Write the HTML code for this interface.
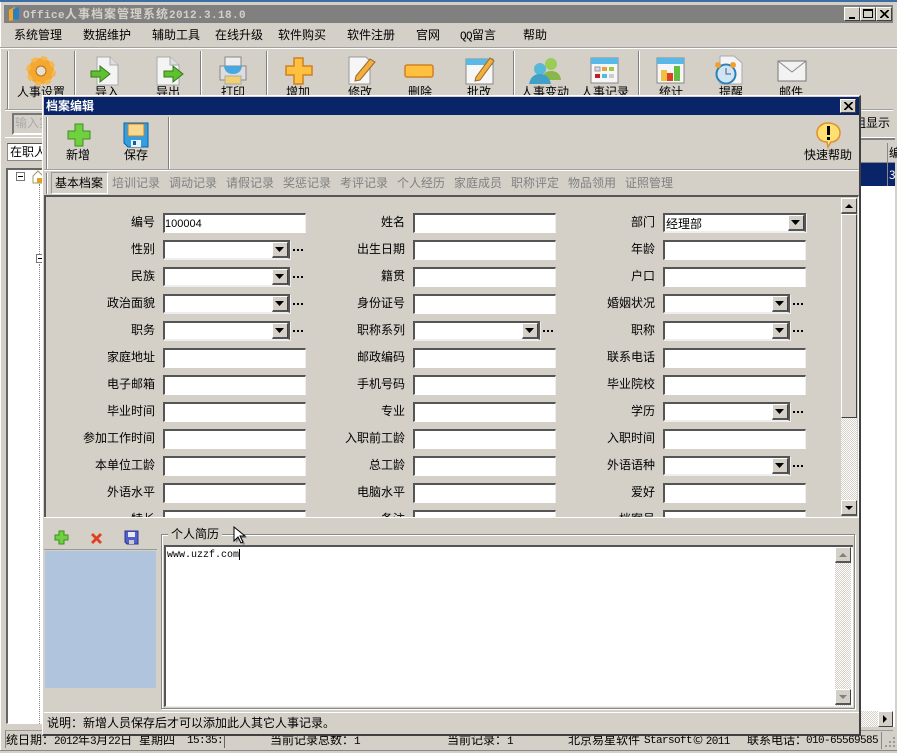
<!DOCTYPE html>
<html><head><meta charset="utf-8"><style>
html,body{margin:0;padding:0;width:897px;height:753px;overflow:hidden;background:#d4d0c8}
body{position:relative;font:12px/14px "WenQuanYi Zen Hei","Noto Sans CJK SC",sans-serif;color:#000}
div,span,svg{position:absolute;box-sizing:border-box}
.t{white-space:nowrap}
.m{top:28px}
.tb{white-space:nowrap;text-align:center;width:60px;top:85px}
.sep{width:2px;background:#fff;border-left:1px solid #808080}
.i{background:#fff;border-top:2px solid #555;border-left:2px solid #555;border-right:1px solid #eee;border-bottom:1px solid #fff;height:20px;width:143px}
.c{background:#fff;border-top:2px solid #555;border-left:2px solid #555;border-right:2px solid #555;border-bottom:1px solid #eee;height:19px;box-shadow:1px 1px 0 #eee;width:127px}
.cb{right:0;top:0;width:16px;height:16px;background:#d4d0c8;border-top:1px solid #fff;border-left:1px solid #fff;border-right:1px solid #404040;border-bottom:2px solid #555}
.cb svg{left:2px;top:4px}
.sb{background:#d4d0c8;border-top:1px solid #fff;border-left:1px solid #fff;border-right:1px solid #404040;border-bottom:2px solid #555}
.sb:after{content:"";position:absolute;left:3px;top:5px;border-left:4px solid transparent;border-right:4px solid transparent;border-top:4px solid #000}
.sb.up:after{border-top:0;border-bottom:4px solid #000}
.sb.gray:after{border-top-color:#808080;border-bottom-color:#808080}
.d{width:12px;height:2px;background:repeating-linear-gradient(90deg,#000 0 2px,transparent 2px 4px)}
.l{width:90px;text-align:right;white-space:nowrap;letter-spacing:0}
.tab{top:176px;color:#808080;white-space:nowrap}
.btn{background:#d4d0c8;border-top:1px solid #fff;border-left:1px solid #fff;border-right:1px solid #404040;border-bottom:1px solid #404040}
.mono{position:static;font:11px/14px 'Liberation Mono',monospace;letter-spacing:-.6px}
</style></head><body>
<div style="left:0;top:0;width:897px;height:2px;background:#3a6ea5"></div>
<div style="left:0;top:2px;width:1px;height:751px;background:#fff"></div>
<div style="left:4px;top:5px;width:889px;height:18px;background:#808080"></div>
<svg style="left:7px;top:6px" width="16" height="16"><path d="M2 4L8 1V14L2 15Z" fill="#f5a623"/><path d="M6 3L12 1V13L6 14Z" fill="#2a7fc0"/></svg>
<div class="t" style="left:23px;top:7px;color:#d4d0c8;font-weight:bold;letter-spacing:1px"><span style="position:static;font:bold 11px/14px 'Liberation Mono',monospace;letter-spacing:.4px">Office</span>人事档案管理系统<span style="position:static;font:bold 11px/14px 'Liberation Mono',monospace;letter-spacing:.4px">2012.3.18.0</span></div>
<div class="btn" style="left:844px;top:7px;width:16px;height:14px"><span style="left:4px;top:9px;width:6px;height:2px;background:#000"></span></div>
<div class="btn" style="left:860px;top:7px;width:16px;height:14px"><span style="left:2px;top:1px;width:10px;height:9px;border:1px solid #000;border-top-width:2px"></span></div>
<div class="btn" style="left:876px;top:7px;width:16px;height:14px"><svg style="left:3px;top:2px" width="9" height="8"><path d="M0 0L8 8M1 0L9 8M8 0L0 8M9 0L1 8" stroke="#000"/></svg></div>

<div class="t m" style="left:14px">系统管理</div><div class="t m" style="left:83px">数据维护</div><div class="t m" style="left:152px">辅助工具</div><div class="t m" style="left:215px">在线升级</div><div class="t m" style="left:278px">软件购买</div><div class="t m" style="left:347px">软件注册</div><div class="t m" style="left:416px">官网</div><div class="t m" style="left:460px"><span class="mono">QQ</span>留言</div><div class="t m" style="left:523px">帮助</div>
<div style="left:0;top:47px;width:897px;height:2px;background:#fff;border-top:1px solid #a0a0a0"></div>

<div class="sep" style="left:7px;top:51px;height:58px"></div><div class="sep" style="left:74px;top:51px;height:45px"></div><div class="sep" style="left:200px;top:51px;height:45px"></div><div class="sep" style="left:266px;top:51px;height:45px"></div><div class="sep" style="left:513px;top:51px;height:45px"></div><div class="sep" style="left:638px;top:51px;height:45px"></div>
<svg style="left:26px;top:56px" width="30" height="30"><circle cx="15" cy="15" r="9" fill="none" stroke="#f4a830" stroke-width="8"/><circle cx="15" cy="15" r="13" fill="none" stroke="#f5b850" stroke-width="4" stroke-dasharray="5.500 4.700"/><circle cx="15" cy="15" r="5" fill="#e4e0d4" stroke="#b87018"/></svg>
<svg style="left:90px;top:56px" width="32" height="32"><path d="M7 1H20L28 9V29H7Z" fill="#f4f4f4" stroke="#aaa"/><path d="M20 1V9H28" fill="#ddd" stroke="#aaa"/><path d="M1 15H10V10L20 18L10 26V21H1Z" fill="#60c030" stroke="#2f7a18"/></svg>
<svg style="left:155px;top:56px" width="34" height="32"><path d="M2 1H15L24 9V29H2Z" fill="#f4f4f4" stroke="#aaa"/><path d="M15 1V9H24" fill="#ddd" stroke="#aaa"/><path d="M9 15H18V10L28 18L18 26V21H9Z" fill="#60c030" stroke="#2f7a18"/></svg>
<svg style="left:219px;top:56px" width="29" height="30"><path d="M6 1H22V10H6Z" fill="#eee" stroke="#888"/><rect x="1" y="10" width="26" height="14" fill="#ddd" stroke="#888"/><path d="M5 10H23Q22 18 14 18Q6 18 5 10Z" fill="#4aa8e0"/><rect x="6" y="20" width="16" height="8" fill="#f0d070" stroke="#aaa"/></svg>
<svg style="left:284px;top:56px" width="30" height="30"><path d="M10 2H19V10H28V19H19V28H10V19H2V10H10Z" fill="#ffc040" stroke="#d08020" stroke-width="1.500"/></svg>
<svg style="left:347px;top:55px" width="30" height="31"><path d="M2 2H19L23 6V29H2Z" fill="#f6f6f6" stroke="#999"/><path d="M9 21L23 4L28 7L13 25L8 26Z" fill="#f0b040" stroke="#a06820"/></svg>
<svg style="left:404px;top:64px" width="30" height="14"><rect x="1" y="1" width="28" height="12" rx="2" fill="#ffc040" stroke="#d08020" stroke-width="1.500"/></svg>
<svg style="left:465px;top:55px" width="31" height="31"><rect x="1" y="4" width="27" height="25" fill="#f6f6f6" stroke="#888"/><rect x="1" y="4" width="27" height="6" fill="#58b8e8"/><path d="M11 22L25 3L29 6L15 25L10 26Z" fill="#f0b040" stroke="#a06820"/></svg>
<svg style="left:528px;top:56px" width="34" height="29"><circle cx="23" cy="8" r="6" fill="#9ccc58"/><path d="M14 24Q15 15 23 15Q32 15 33 24Z" fill="#88b848"/><circle cx="12" cy="13" r="6" fill="#58b8d8"/><path d="M1 28Q3 18 12 18Q21 18 23 28Z" fill="#40a0c8"/></svg>
<svg style="left:590px;top:57px" width="30" height="28"><rect x="1" y="1" width="27" height="25" fill="#f6f6f6" stroke="#888"/><rect x="1" y="1" width="27" height="6" fill="#58b8e8"/><rect x="5" y="10" width="5" height="4" fill="#ddd" stroke="#999"/><rect x="12" y="10" width="5" height="4" fill="#e8a040"/><rect x="19" y="10" width="5" height="4" fill="#9c4"/><rect x="5" y="17" width="5" height="4" fill="#c02020"/><rect x="12" y="17" width="5" height="4" fill="#5bd"/><rect x="19" y="17" width="5" height="4" fill="#ccc"/></svg>
<svg style="left:656px;top:57px" width="30" height="28"><rect x="1" y="1" width="27" height="25" fill="#f6f6f6" stroke="#888"/><rect x="1" y="1" width="27" height="6" fill="#58b8e8"/><rect x="5" y="13" width="6" height="11" fill="#f0c040"/><rect x="11" y="16" width="6" height="8" fill="#e04020"/><rect x="18" y="9" width="6" height="15" fill="#60c040"/></svg>
<svg style="left:714px;top:55px" width="30" height="31"><path d="M6 1H20L28 8V29H6Z" fill="#f4f4f4" stroke="#aaa"/><circle cx="12" cy="19" r="9.500" fill="#cfe4f4" stroke="#2a80b8" stroke-width="2"/><path d="M12 13V19H17" stroke="#557" fill="none"/><circle cx="4" cy="10" r="3" fill="#f0a030"/><circle cx="19" cy="10" r="3" fill="#f0a030"/></svg>
<svg style="left:777px;top:60px" width="30" height="22"><rect x="1" y="1" width="28" height="20" fill="#f2f2f2" stroke="#777"/><path d="M1 1L15 12L29 1" fill="none" stroke="#888"/></svg>
<div class="tb" style="left:11px">人事设置</div><div class="tb" style="left:77px">导入</div><div class="tb" style="left:138px">导出</div><div class="tb" style="left:203px">打印</div><div class="tb" style="left:268px">增加</div><div class="tb" style="left:330px">修改</div><div class="tb" style="left:390px">删除</div><div class="tb" style="left:449px">批改</div><div class="tb" style="left:515px">人事变动</div><div class="tb" style="left:575px">人事记录</div><div class="tb" style="left:641px">统计</div><div class="tb" style="left:701px">提醒</div><div class="tb" style="left:761px">邮件</div>

<div style="left:5px;top:109px;width:888px;height:2px;background:#fff;border-top:1px solid #a0a0a0"></div>
<div style="left:12px;top:113px;width:32px;height:22px;background:#d4d0c8;border:2px solid #777;border-right:0;border-bottom-color:#fff"></div>
<div class="t" style="left:15px;top:116px;color:#aaa;width:28px;overflow:hidden">输入实</div>
<div class="t" style="left:854px;top:116px">组显示</div>
<div style="left:5px;top:137px;width:890px;height:1px;background:#fff"></div>
<div style="left:7px;top:143px;width:37px;height:18px;background:#fff;border:1px solid #888;border-top-color:#555"></div>
<div class="t" style="left:10px;top:145px;width:33px;overflow:hidden">在职人</div>
<div style="left:6px;top:168px;width:38px;height:556px;background:#fff;border:2px solid #666;border-right:0;border-bottom:1px solid #fff"></div>
<div style="left:16px;top:172px;width:9px;height:9px;background:#fff;border:1px solid #777"><span style="left:1px;top:3px;width:5px;height:1px;background:#000"></span></div>
<svg style="left:32px;top:170px" width="11" height="14"><path d="M1 6L6 1L11 6V13H1Z" fill="#fff" stroke="#996"/><rect x="5" y="8" width="5" height="5" fill="#e0a020"/></svg>
<div style="left:36px;top:254px;width:7px;height:9px;background:#fff;border:1px solid #777"><span style="left:1px;top:3px;width:5px;height:1px;background:#000"></span></div>
<div style="left:39px;top:184px;width:1px;height:70px;border-left:1px dotted #888"></div>
<div style="left:39px;top:264px;width:1px;height:460px;border-left:1px dotted #888"></div>

<div style="left:860px;top:138px;width:35px;height:2px;background:#808080"></div>
<div style="left:860px;top:140px;width:35px;height:23px;background:#d4d0c8;border-bottom:1px solid #888"></div>
<div style="left:887px;top:143px;width:1px;height:19px;background:#888"></div>
<div class="t" style="left:889px;top:146px">编</div>
<div style="left:860px;top:163px;width:35px;height:23px;background:#0a246a"></div>
<div style="left:887px;top:163px;width:1px;height:23px;background:#888"></div>
<div class="t" style="left:889px;top:168px;color:#fff">3</div>
<div style="left:860px;top:186px;width:35px;height:525px;background:#fff"></div>
<div style="left:860px;top:711px;width:35px;height:16px;background:#fff"></div>
<div style="left:860px;top:711px;width:18px;height:16px;background:repeating-conic-gradient(#d4d0c8 0 25%,#fff 0 50%) 0 0/2px 2px"></div>
<div class="btn" style="left:878px;top:711px;width:15px;height:16px"><span style="left:4px;top:3px;border-top:4px solid transparent;border-bottom:4px solid transparent;border-left:4px solid #000"></span></div>

<div style="left:5px;top:730px;width:888px;height:1px;background:#999"></div>
<div style="left:5px;top:731px;width:1px;height:17px;background:#888"></div>
<div class="t" style="left:6px;top:733px">统日期：<span class="mono">2012</span>年<span class="mono">3</span>月<span class="mono">22</span>日</div>
<div class="t" style="left:139px;top:733px">星期四</div>
<div class="t mono" style="position:absolute;left:187px;top:734px">15:35:</div>
<div style="left:224px;top:732px;width:1px;height:16px;background:#666"></div>
<div class="t" style="left:270px;top:733px">当前记录总数：<span class="mono">1</span></div>
<div class="t" style="left:447px;top:733px">当前记录：<span class="mono">1</span></div>
<div class="t" style="left:568px;top:733px">北京易星软件</div>
<div class="t mono" style="position:absolute;left:644px;top:734px">Starsoft</div>
<div class="t" style="left:693px;top:733px">© <span class="mono">2011</span></div>
<div class="t" style="left:747px;top:733px">联系电话：</div>
<div class="t mono" style="position:absolute;left:806px;top:734px">010-65569585</div>
<div style="left:881px;top:732px;width:1px;height:17px;background:#888"></div>
<svg style="left:883px;top:735px" width="13" height="13"><path d="M10 2h2v2h-2zM6 6h2v2H6zM10 6h2v2h-2zM2 10h2v2H2zM6 10h2v2H6zM10 10h2v2h-2z" fill="#999"/></svg>
<div style="left:0;top:750px;width:897px;height:3px;background:#d4d0c8;border-top:1px solid #888"></div>

<!-- dialog -->
<div style="left:42px;top:95px;width:819px;height:641px;background:#d4d0c8;border-top:1px solid #fff;border-left:1px solid #fff;border-right:2px solid #404040;border-bottom:2px solid #404040"></div>
<div style="left:44px;top:97px;width:815px;height:18px;background:#0a246a"></div>
<div class="t" style="left:46px;top:99px;color:#fff;font-weight:bold">档案编辑</div>
<div class="btn" style="left:840px;top:99px;width:16px;height:14px"><svg style="left:3px;top:2px" width="9" height="8"><path d="M0 0L8 8M1 0L9 8M8 0L0 8M9 0L1 8" stroke="#000"/></svg></div>

<div class="sep" style="left:46px;top:117px;height:52px"></div>
<div class="sep" style="left:168px;top:117px;height:52px"></div>
<svg style="left:66px;top:122px" width="26" height="26"><path d="M9 2H17V9H24V17H17V24H9V17H2V9H9Z" fill="#70d040" stroke="#3c9020"/></svg>
<svg style="left:123px;top:122px" width="26" height="26"><path d="M1 1H25V25H5L1 21Z" fill="#30a0e0" stroke="#1060a0"/><rect x="5" y="2" width="16" height="12" fill="#f8d890" stroke="#c08030"/><rect x="8" y="18" width="10" height="7" fill="#e8f0f8"/><rect x="10" y="19" width="3" height="4" fill="#1060a0"/></svg>
<div class="t" style="left:66px;top:148px">新增</div><div class="t" style="left:124px;top:148px">保存</div>
<svg style="left:816px;top:121px" width="25" height="28"><path d="M12 2C19 2 24 6 24 12C24 18 19 21 15 21L12 26L11 21C6 21 1 18 1 12C1 6 6 2 12 2Z" fill="#ffe070" stroke="#e09030" stroke-width="1.500"/><rect x="11" y="5" width="3" height="9" fill="#000"/><rect x="11" y="16" width="3" height="3" fill="#000"/></svg>
<div class="t" style="left:804px;top:148px">快速帮助</div>
<div style="left:44px;top:169px;width:815px;height:2px;background:#fff;border-top:1px solid #a0a0a0"></div>

<div class="sep" style="left:46px;top:173px;height:21px"></div>
<div style="left:51px;top:172px;width:57px;height:22px;border:1px solid #fff;border-top-color:#999;border-left-color:#999"></div>
<div class="t" style="left:55px;top:176px">基本档案</div>
<div class="tab" style="left:112px">培训记录</div><div class="tab" style="left:169px">调动记录</div><div class="tab" style="left:226px">请假记录</div><div class="tab" style="left:283px">奖惩记录</div><div class="tab" style="left:340px">考评记录</div><div class="tab" style="left:397px">个人经历</div><div class="tab" style="left:454px">家庭成员</div><div class="tab" style="left:511px">职称评定</div><div class="tab" style="left:568px">物品领用</div><div class="tab" style="left:625px">证照管理</div>

<!-- form -->
<div style="left:44px;top:195px;width:815px;height:322px;overflow:hidden;border-top:2px solid #555;border-left:2px solid #555;border-right:1px solid #fff">
<div class="l" style="left:19px;top:18px;width:90px">编号</div><div class="i" style="left:117px;top:16px"><span class="t" style="left:0;top:2px;font:11px/14px 'Liberation Sans',sans-serif">100004</span></div>
<div class="l" style="left:269px;top:18px">姓名</div><div class="i" style="left:367px;top:16px"></div>
<div class="l" style="left:519px;top:18px">部门</div><div class="c" style="left:617px;top:16px;width:143px"><span class="t" style="left:1px;top:2px">经理部</span><div class="cb"><svg width="9" height="5"><path d="M0 0H9L4.500 5Z" fill="#000"/></svg></div></div>

<div class="l" style="left:19px;top:45px">性别</div><div class="c" style="left:117px;top:43px"><div class="cb"><svg width="9" height="5"><path d="M0 0H9L4.500 5Z" fill="#000"/></svg></div></div><div class="d" style="left:247px;top:52px"></div>
<div class="l" style="left:269px;top:45px">出生日期</div><div class="i" style="left:367px;top:43px"></div>
<div class="l" style="left:519px;top:45px">年龄</div><div class="i" style="left:617px;top:43px"></div>

<div class="l" style="left:19px;top:72px">民族</div><div class="c" style="left:117px;top:70px"><div class="cb"><svg width="9" height="5"><path d="M0 0H9L4.500 5Z" fill="#000"/></svg></div></div><div class="d" style="left:247px;top:79px"></div>
<div class="l" style="left:269px;top:72px">籍贯</div><div class="i" style="left:367px;top:70px"></div>
<div class="l" style="left:519px;top:72px">户口</div><div class="i" style="left:617px;top:70px"></div>

<div class="l" style="left:19px;top:99px">政治面貌</div><div class="c" style="left:117px;top:97px"><div class="cb"><svg width="9" height="5"><path d="M0 0H9L4.500 5Z" fill="#000"/></svg></div></div><div class="d" style="left:247px;top:106px"></div>
<div class="l" style="left:269px;top:99px">身份证号</div><div class="i" style="left:367px;top:97px"></div>
<div class="l" style="left:519px;top:99px">婚姻状况</div><div class="c" style="left:617px;top:97px"><div class="cb"><svg width="9" height="5"><path d="M0 0H9L4.500 5Z" fill="#000"/></svg></div></div><div class="d" style="left:747px;top:106px"></div>

<div class="l" style="left:19px;top:126px">职务</div><div class="c" style="left:117px;top:124px"><div class="cb"><svg width="9" height="5"><path d="M0 0H9L4.500 5Z" fill="#000"/></svg></div></div><div class="d" style="left:247px;top:133px"></div>
<div class="l" style="left:269px;top:126px">职称系列</div><div class="c" style="left:367px;top:124px"><div class="cb"><svg width="9" height="5"><path d="M0 0H9L4.500 5Z" fill="#000"/></svg></div></div><div class="d" style="left:497px;top:133px"></div>
<div class="l" style="left:519px;top:126px">职称</div><div class="c" style="left:617px;top:124px"><div class="cb"><svg width="9" height="5"><path d="M0 0H9L4.500 5Z" fill="#000"/></svg></div></div><div class="d" style="left:747px;top:133px"></div>

<div class="l" style="left:19px;top:153px">家庭地址</div><div class="i" style="left:117px;top:151px"></div>
<div class="l" style="left:269px;top:153px">邮政编码</div><div class="i" style="left:367px;top:151px"></div>
<div class="l" style="left:519px;top:153px">联系电话</div><div class="i" style="left:617px;top:151px"></div>

<div class="l" style="left:19px;top:180px">电子邮箱</div><div class="i" style="left:117px;top:178px"></div>
<div class="l" style="left:269px;top:180px">手机号码</div><div class="i" style="left:367px;top:178px"></div>
<div class="l" style="left:519px;top:180px">毕业院校</div><div class="i" style="left:617px;top:178px"></div>

<div class="l" style="left:19px;top:207px">毕业时间</div><div class="i" style="left:117px;top:205px"></div>
<div class="l" style="left:269px;top:207px">专业</div><div class="i" style="left:367px;top:205px"></div>
<div class="l" style="left:519px;top:207px">学历</div><div class="c" style="left:617px;top:205px"><div class="cb"><svg width="9" height="5"><path d="M0 0H9L4.500 5Z" fill="#000"/></svg></div></div><div class="d" style="left:747px;top:214px"></div>

<div class="l" style="left:19px;top:234px">参加工作时间</div><div class="i" style="left:117px;top:232px"></div>
<div class="l" style="left:269px;top:234px">入职前工龄</div><div class="i" style="left:367px;top:232px"></div>
<div class="l" style="left:519px;top:234px">入职时间</div><div class="i" style="left:617px;top:232px"></div>

<div class="l" style="left:19px;top:261px">本单位工龄</div><div class="i" style="left:117px;top:259px"></div>
<div class="l" style="left:269px;top:261px">总工龄</div><div class="i" style="left:367px;top:259px"></div>
<div class="l" style="left:519px;top:261px">外语语种</div><div class="c" style="left:617px;top:259px"><div class="cb"><svg width="9" height="5"><path d="M0 0H9L4.500 5Z" fill="#000"/></svg></div></div><div class="d" style="left:747px;top:268px"></div>

<div class="l" style="left:19px;top:288px">外语水平</div><div class="i" style="left:117px;top:286px"></div>
<div class="l" style="left:269px;top:288px">电脑水平</div><div class="i" style="left:367px;top:286px"></div>
<div class="l" style="left:519px;top:288px">爱好</div><div class="i" style="left:617px;top:286px"></div>

<div class="l" style="left:19px;top:315px">特长</div><div class="i" style="left:117px;top:313px"></div>
<div class="l" style="left:269px;top:315px">备注</div><div class="i" style="left:367px;top:313px"></div>
<div class="l" style="left:519px;top:315px">档案号</div><div class="i" style="left:617px;top:313px"></div>

<div style="left:795px;top:1px;width:16px;height:318px;background:repeating-conic-gradient(#d4d0c8 0 25%,#fff 0 50%) 0 0/2px 2px"></div>
<div class="sb up" style="left:795px;top:1px;width:16px;height:16px"></div>
<div style="left:795px;top:17px;width:16px;height:204px;background:#d4d0c8;border-top:1px solid #fff;border-left:1px solid #fff;border-right:1px solid #404040;border-bottom:1px solid #404040"></div>
<div class="sb" style="left:795px;top:303px;width:16px;height:16px"></div>
</div>
<div style="left:44px;top:517px;width:815px;height:1px;background:#fff"></div>

<!-- lower -->
<svg style="left:54px;top:530px" width="15" height="15"><path d="M5 1H10V5H14V10H10V14H5V10H1V5H5Z" fill="#70d040" stroke="#3c9020"/></svg>
<svg style="left:90px;top:532px" width="13" height="13"><path d="M1 3L3 1L6.500 4.500L10 1L12 3L8.500 6.500L12 10L10 12L6.500 8.500L3 12L1 10L4.500 6.500Z" fill="#e04020"/></svg>
<svg style="left:124px;top:530px" width="15" height="15"><path d="M1 1H14V14H3L1 12Z" fill="#5060c8" stroke="#303090"/><rect x="4" y="2" width="7" height="5" fill="#e8e8f0"/><rect x="5" y="10" width="5" height="4" fill="#ccc"/></svg>
<div style="left:44px;top:549px;width:113px;height:1px;background:#999"></div>
<div style="left:45px;top:551px;width:111px;height:137px;background:#b0c4de"></div>

<div style="left:161px;top:534px;width:694px;height:175px;border:1px solid #888;box-shadow:inset 1px 1px 0 #fff,1px 1px 0 #fff"></div>
<div class="t" style="left:168px;top:527px;background:#d4d0c8;padding:0 3px">个人简历</div>
<svg style="left:233px;top:526px" width="15" height="21"><path d="M3 3V17L7 13L10 19L12 18L9 12H14Z" fill="#888"/><path d="M1 1V15L5 11L8 17L10 16L7 10H12Z" fill="#fff" stroke="#000"/></svg>
<div style="left:164px;top:545px;width:689px;height:162px;background:#fff;border-top:2px solid #555;border-left:2px solid #555;border-bottom:1px solid #eee"></div>
<div class="t" style="left:167px;top:549px;font:10px/14px 'Liberation Mono',monospace">www.uzzf.com</div>
<div style="left:239px;top:549px;width:1px;height:11px;background:#000"></div>
<div style="left:835px;top:547px;width:16px;height:159px;background:repeating-conic-gradient(#d4d0c8 0 25%,#fff 0 50%) 0 0/2px 2px"></div>
<div class="sb up gray" style="left:835px;top:547px;width:16px;height:16px"></div>
<div class="sb gray" style="left:835px;top:689px;width:16px;height:16px"></div>

<div style="left:44px;top:712px;width:815px;height:1px;background:#fff;border-top:0"></div>
<div class="t" style="left:47px;top:716px">说明：新增人员保存后才可以添加此人其它人事记录。</div>
</body></html>
